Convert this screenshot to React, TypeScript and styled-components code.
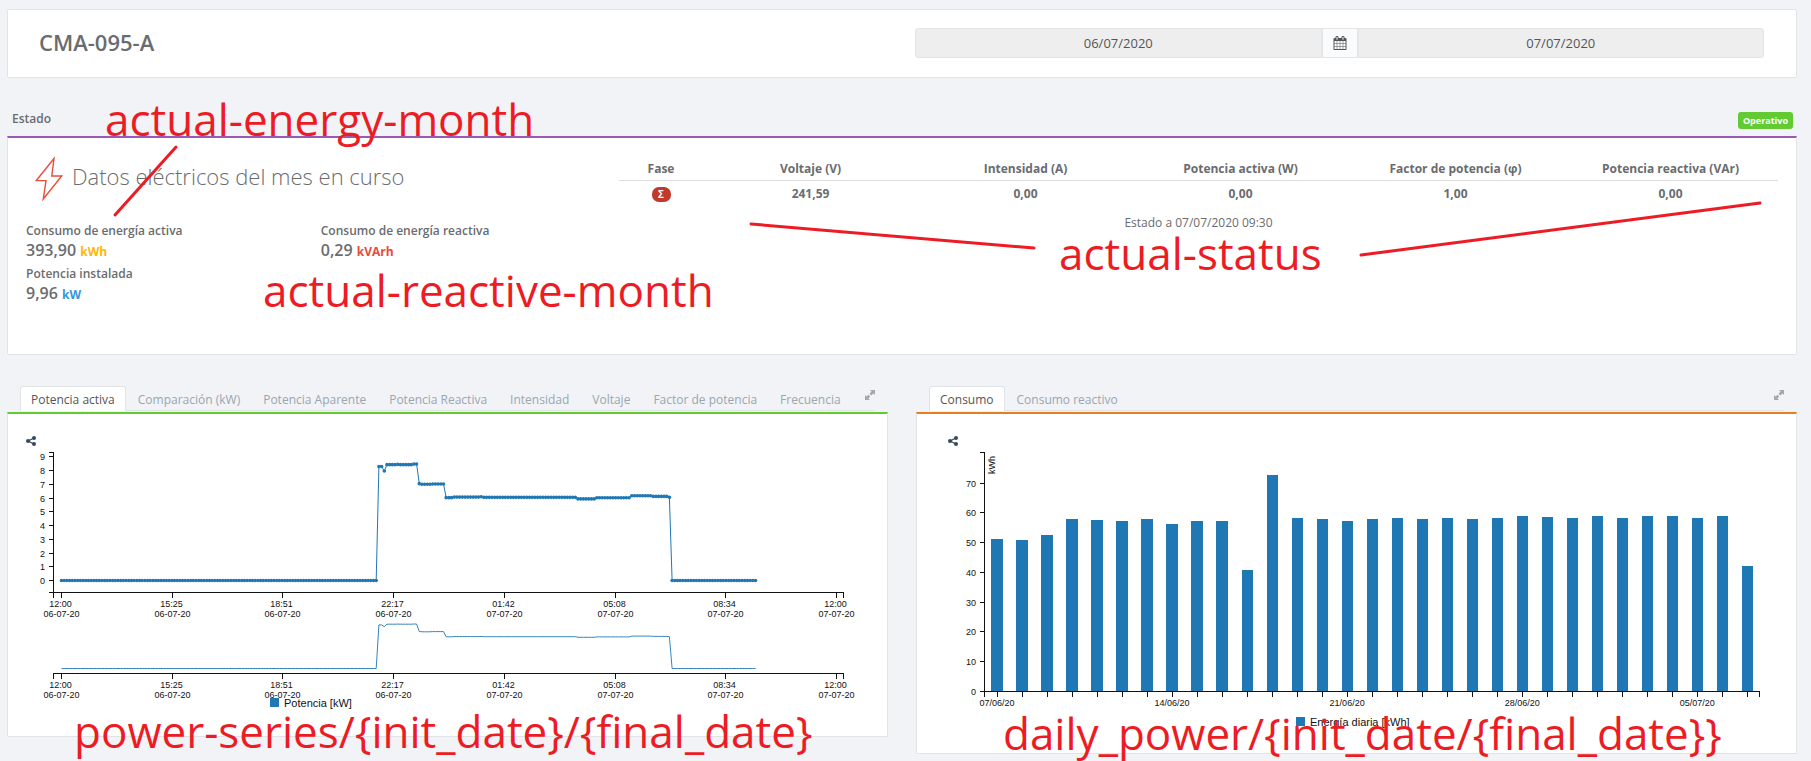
import React from "react";
import styled, { createGlobalStyle } from "styled-components";

const GlobalStyle = createGlobalStyle`
  *, *::before, *::after { box-sizing: border-box; }
  body {
    margin: 0;
    background: #f1f3f7;
    color: #6a6c6f;
    font-family: "Open Sans", "Noto Sans", sans-serif;
    font-size: 12px;
    line-height: 18px;
  }
`;

const BORDER = "#e1e4e7";
const SERIES = "#1f77b4";
const MARK = "#ed1c24";

const Page = styled.main`
  min-height: 100vh;
  padding: 9px 14px 7px 7px;
  overflow: hidden;
`;

const HeaderCard = styled.header`
  display: grid;
  grid-template-columns: 1fr 1fr;
  gap: 27px;
  align-items: center;
  padding: 18px 32px 19px 31px;
  background: #fff;
  border: 1px solid ${BORDER};
  border-radius: 2px;
`;

const DeviceName = styled.h1`
  margin: 0;
  padding-bottom: 2px;
  font-size: 22px;
  line-height: 28px;
  font-weight: 600;
`;

const DateRange = styled.div`
  display: flex;
  height: 30px;
`;

const DateInput = styled.input<{ $side: "start" | "end" }>`
  flex: 1;
  min-width: 0;
  padding: 0 8px 1px;
  border: 1px solid #e4e5e7;
  border-radius: ${(p) => (p.$side === "start" ? "3px 0 0 3px" : "0 3px 3px 0")};
  background: #eee;
  color: #555;
  font: inherit;
  font-size: 13px;
  text-align: center;
`;

const CalendarButton = styled.button`
  display: flex;
  align-items: center;
  justify-content: center;
  width: 36px;
  padding: 0;
  border: 1px solid #e4e5e7;
  background: #fafbfc;
  color: #555;
`;

const StatusHead = styled.div`
  display: flex;
  align-items: flex-start;
  justify-content: space-between;
  padding: 34px 4px 7px 5px;
`;

const StatusTitle = styled.h2`
  margin: 0;
  font-size: 12px;
  line-height: 14px;
  font-weight: 600;
`;

const StateBadge = styled.span`
  padding: 0 5px;
  border-radius: 3px;
  background: #62cb31;
  color: #fff;
  font-size: 9px;
  line-height: 17px;
  font-weight: 700;
`;

const Panel = styled.section<{ $accent: string }>`
  position: relative;
  background: #fff;
  border: 1px solid ${BORDER};
  border-top: 2px solid ${(p) => p.$accent};
  border-radius: 0 0 2px 2px;
`;

const StatusBody = styled.div`
  display: grid;
  grid-template-columns: 1fr 2fr;
  padding: 18px 0 50px;
`;

const SectionTitle = styled.div`
  display: flex;
  align-items: center;
  gap: 9px;
  padding-left: 27px;
`;

const SectionHeading = styled.h2`
  margin: 0;
  padding-bottom: 5px;
  font-size: 22px;
  line-height: 32px;
  font-weight: 300;
`;

const StatGrid = styled.div`
  display: grid;
  grid-template-columns: 51% 1fr;
  row-gap: 4px;
  padding: 21px 0 0 18px;
`;

const StatLabel = styled.div`
  font-weight: 600;
  line-height: 17px;
`;

const StatValue = styled.div`
  font-size: 16px;
  line-height: 22px;
  font-weight: 600;
`;

const Unit = styled.span<{ $color: string }>`
  color: ${(p) => p.$color};
  font-size: 12px;
  line-height: 12px;
  font-weight: 700;
`;

const Readings = styled.div`
  padding: 2px 18px 0 15px;
  text-align: center;
`;

const ReadingTable = styled.table`
  width: 100%;
  table-layout: fixed;
  border-collapse: collapse;
  font-weight: 700;

  th, td { padding: 0; }
  th { padding: 2px 0; border-bottom: 1px solid #ddd; }
  th:first-child { width: 84px; }
  td { padding-top: 4px; }
`;

const PhaseBadge = styled.span`
  display: inline-block;
  width: 19px;
  border-radius: 7px;
  background: #c0392b;
  color: #fff;
  font-size: 10px;
  line-height: 15px;
`;

const ReadingTime = styled.p`
  margin: 11px 0 0;
`;

const ChartRow = styled.div`
  display: grid;
  grid-template-columns: minmax(0, 1fr) minmax(0, 1fr);
  gap: 28px;
  align-items: start;
  padding-top: 31px;
`;

const TabBar = styled.div`
  display: flex;
  align-items: flex-start;
  gap: 1px;
  height: 25px;
  margin: 0 13px 1px;
  border-bottom: 1px solid ${BORDER};
`;

const Tab = styled.button<{ $active?: boolean }>`
  height: 25px;
  padding: 2px 10px 0;
  border: 1px solid ${(p) => (p.$active ? BORDER : "transparent")};
  border-bottom: 0;
  border-radius: 3px 3px 0 0;
  background: ${(p) => (p.$active ? "#fff" : "transparent")};
  color: ${(p) => (p.$active ? "#555" : "#9aa6b1")};
  font: inherit;
  white-space: nowrap;
`;

const ExpandButton = styled.button`
  display: flex;
  margin-left: auto;
  padding: 4px 0 0;
  border: 0;
  background: none;
  color: #a5a8ab;
`;

const ShareButton = styled.button<{ $inset: number }>`
  display: block;
  margin: 22px 0 0 ${(p) => p.$inset}px;
  padding: 0;
  border: 0;
  background: none;
  color: #34495e;
  line-height: 0;
`;

const Chart = styled.svg`
  display: block;
  width: 100%;
  height: auto;

  text { font-family: "Liberation Sans", Arial, sans-serif; font-size: 9px; fill: #111; }
  .legend { font-size: 11px; }
  .axis { fill: none; stroke: #111; shape-rendering: crispEdges; }
`;

const Note = styled.span<{ $x: number; $y: number }>`
  position: absolute;
  left: ${(p) => p.$x}px;
  top: ${(p) => p.$y}px;
  z-index: 1;
  color: ${MARK};
  font-size: 44px;
  line-height: 60px;
  white-space: nowrap;
  pointer-events: none;
`;

const Strokes = styled.svg`
  position: absolute;
  left: 0;
  top: 0;
  width: 100%;
  height: 100%;
  overflow: visible;
  pointer-events: none;
  stroke: ${MARK};
  stroke-width: 3;
  stroke-linecap: round;
`;

const CalendarIcon = () => (
  <svg width="14" height="14" viewBox="0 0 1792 1792" fill="currentColor" aria-hidden="true">
    <path d="M192 1664h288v-288h-288v288zm352 0h320v-288h-320v288zm-352-352h288v-320h-288v320zm352 0h320v-320h-320v320zm-352-384h288v-288h-288v288zm736 736h320v-288h-320v288zm-384-736h320v-288h-320v288zm768 736h288v-288h-288v288zm-384-352h320v-320h-320v320zm-352-864v-288q0-13-9.5-22.5t-22.5-9.5h-64q-13 0-22.5 9.5t-9.5 22.5v288q0 13 9.5 22.5t22.5 9.5h64q13 0 22.5-9.5t9.5-22.5zm736 864h288v-320h-288v320zm-384-384h320v-288h-320v288zm384 0h288v-288h-288v288zm32-480v-288q0-13-9.5-22.5t-22.5-9.5h-64q-13 0-22.5 9.5t-9.5 22.5v288q0 13 9.5 22.5t22.5 9.5h64q13 0 22.5-9.5t9.5-22.5zm384-64v1280q0 52-38 90t-90 38h-1408q-52 0-90-38t-38-90v-1280q0-52 38-90t90-38h128v-96q0-66 47-113t113-47h64q66 0 113 47t47 113v96h384v-96q0-66 47-113t113-47h64q66 0 113 47t47 113v96h128q52 0 90 38t38 90z" />
  </svg>
);

const BoltIcon = () => (
  <svg width="28" height="45" viewBox="0 0 28 45" fill="none" stroke="#e74c3c" strokeWidth="1.4" strokeLinejoin="miter" aria-hidden="true">
    <path d="M19 2.5 L1.3 24.6 H11 L8.3 43 L26.7 20 H16.8 Z" />
  </svg>
);

const ShareIcon = () => (
  <svg width="10" height="10" viewBox="0 0 10 10" fill="currentColor" stroke="currentColor" aria-hidden="true">
    <path d="M8 2 L2 5 L8 8" fill="none" strokeWidth="1.3" />
    <g stroke="none">
      <circle cx="2" cy="5" r="2" />
      <circle cx="8" cy="2" r="2" />
      <circle cx="8" cy="8" r="2" />
    </g>
  </svg>
);

const ExpandIcon = () => (
  <svg width="10" height="10" viewBox="0 0 10 10" fill="currentColor" aria-hidden="true">
    <path d="M5 0h5v5L8.4 3.4 6.3 5.5 4.5 3.7 6.6 1.6zM0 5l1.6 1.6L3.4 4.8 5.2 6.6 3.4 8.4 5 10H0z" />
  </svg>
);

/* One power sample every five minutes, as [value in kW, sample count]. */
const powerRuns: [number, number][] = [
  [0, 118], [8.3, 2], [7.97, 1], [8.43, 4], [8.45, 1], [8.43, 5], [8.47, 2], [7.05, 1], [7, 4], [7.02, 5],
  [6.03, 3], [6.07, 10], [6.1, 1], [6.05, 35], [5.94, 7], [6.02, 13], [6.17, 8], [6.12, 6], [6.05, 1], [0, 32],
];
const power = powerRuns.flatMap(([value, count]) => Array<number>(count).fill(value));

const timeTicks = [
  ["12:00", "06-07-20"], ["15:25", "06-07-20"], ["18:51", "06-07-20"], ["22:17", "06-07-20"],
  ["01:42", "07-07-20"], ["05:08", "07-07-20"], ["08:34", "07-07-20"], ["12:00", "07-07-20"],
];
const timeX = (sample: number) => 52.5 + sample * 2.69;
const tracePath = (y: (v: number) => number) =>
  power.map((v, i) => `${i ? "L" : "M"}${timeX(i).toFixed(1)} ${y(v).toFixed(1)}`).join("");

const TimeAxis = ({ y }: { y: number }) => (
  <g>
    <path className="axis" d={`M44.5 ${y + 5}V${y}H834.5V${y + 5}`} />
    {timeTicks.map(([hour, day], i) => {
      const x = Math.round(52 + i * 110.7) + 0.5;
      return (
        <g key={i} textAnchor="middle">
          <path className="axis" d={`M${x} ${y}v5`} />
          <text x={x - 1} y={y + 14}>{hour}</text>
          <text x={x} y={y + 24}>{day}</text>
        </g>
      );
    })}
  </g>
);

const PowerChart = () => {
  const mainY = (v: number) => 134.5 - v * 13.74;
  const briefY = (v: number) => 222.5 - v * 5.25;
  return (
    <Chart viewBox="-1 0 879 290" role="img" aria-label="Potencia activa">
      <path className="axis" d="M39.5 6.5H44.5V146.5H39.5" />
      {Array.from({ length: 10 }, (_, v) => {
        const y = Math.floor(mainY(v)) + 0.5;
        return (
          <g key={v}>
            <path className="axis" d={`M39.5 ${y}h5`} />
            <text x="36" y={y + 3} textAnchor="end">{v}</text>
          </g>
        );
      })}
      <TimeAxis y={146.5} />
      <path d={tracePath(mainY)} fill="none" stroke={SERIES} />
      <g fill={SERIES}>
        {power.map((v, i) => <circle key={i} cx={timeX(i)} cy={mainY(v)} r="1.8" />)}
      </g>
      <path d={tracePath(briefY)} fill="none" stroke={SERIES} strokeWidth="0.9" />
      <TimeAxis y={227.5} />
      <rect x="261" y="252" width="9" height="9" fill={SERIES} />
      <text className="legend" x="275" y="261">Potencia [kW]</text>
    </Chart>
  );
};

const dailyEnergy = [
  51.2, 50.9, 52.6, 57.9, 57.6, 57.3, 57.9, 56.3, 57.3, 57.3, 40.8, 72.7, 58.3, 57.9, 57.3, 57.9,
  58.3, 57.9, 58.3, 57.9, 58.3, 59, 58.6, 58.3, 59, 58.3, 59, 59, 58.3, 59, 42.1,
];
const weekLabels = ["07/06/20", "14/06/20", "21/06/20", "28/06/20", "05/07/20"];

const EnergyChart = () => {
  const y = (v: number) => 245.5 - v * 2.976;
  const x = (day: number) => 80 + day * 25.01;
  return (
    <Chart viewBox="0 0 879 307" role="img" aria-label="Consumo">
      <g fill={SERIES} shapeRendering="crispEdges">
        {dailyEnergy.map((v, i) => (
          <rect key={i} x={x(i) - 5.6} y={y(v)} width="11.25" height={245.5 - y(v)} />
        ))}
      </g>
      <path className="axis" d="M62.5 6.5H67.5V245.5H62.5" />
      <path className="axis" d="M67.5 250.5V245.5H842.5V250.5" />
      {[0, 10, 20, 30, 40, 50, 60, 70].map((v) => {
        const ty = Math.floor(y(v)) + 0.5;
        return (
          <g key={v}>
            <path className="axis" d={`M62.5 ${ty}h5`} />
            <text x="59" y={ty + 3} textAnchor="end">{v}</text>
          </g>
        );
      })}
      {dailyEnergy.map((_, i) => (
        <path key={i} className="axis" d={`M${Math.round(x(i)) + 0.5} 245.5v5`} />
      ))}
      {weekLabels.map((label, i) => (
        <text key={label} x={x(i * 7)} y="260" textAnchor="middle">{label}</text>
      ))}
      <text transform="translate(78 10) rotate(-90)" textAnchor="end">kWh</text>
      <rect x="379" y="271" width="9" height="9" fill={SERIES} />
      <text className="legend" x="393" y="280">Energía diaria [kWh]</text>
    </Chart>
  );
};

const stats = [
  { label: "Consumo de energía activa", value: "393,90", unit: "kWh", color: "#ffb606" },
  { label: "Consumo de energía reactiva", value: "0,29", unit: "kVArh", color: "#e74c3c" },
  { label: "Potencia instalada", value: "9,96", unit: "kW", color: "#3498db" },
];

const readings = [
  ["Voltaje (V)", "241,59"],
  ["Intensidad (A)", "0,00"],
  ["Potencia activa (W)", "0,00"],
  ["Factor de potencia (φ)", "1,00"],
  ["Potencia reactiva (VAr)", "0,00"],
];

type ChartPanelProps = {
  tabs: string[];
  accent: string;
  shareInset: number;
  children: React.ReactNode;
};

const ChartPanel = ({ tabs, accent, shareInset, children }: ChartPanelProps) => (
  <div>
    <TabBar role="tablist">
      {tabs.map((tab, i) => (
        <Tab key={tab} type="button" role="tab" aria-selected={i === 0} $active={i === 0}>{tab}</Tab>
      ))}
      <ExpandButton type="button" aria-label="Ampliar"><ExpandIcon /></ExpandButton>
    </TabBar>
    <Panel $accent={accent}>
      <ShareButton type="button" aria-label="Compartir" $inset={shareInset}><ShareIcon /></ShareButton>
      {children}
    </Panel>
  </div>
);

export default function App() {
  return (
    <>
      <GlobalStyle />
      <Page>
        <HeaderCard>
          <DeviceName>CMA-095-A</DeviceName>
          <DateRange>
            <DateInput $side="start" aria-label="Fecha inicial" readOnly value="06/07/2020" />
            <CalendarButton type="button" aria-label="Elegir fechas"><CalendarIcon /></CalendarButton>
            <DateInput $side="end" aria-label="Fecha final" readOnly value="07/07/2020" />
          </DateRange>
        </HeaderCard>

        <StatusHead>
          <StatusTitle>Estado</StatusTitle>
          <StateBadge>Operativo</StateBadge>
        </StatusHead>
        <Panel $accent="#9b59b6">
          <StatusBody>
            <div>
              <SectionTitle>
                <BoltIcon />
                <SectionHeading>Datos eléctricos del mes en curso</SectionHeading>
              </SectionTitle>
              <StatGrid>
                {stats.map((s) => (
                  <div key={s.label}>
                    <StatLabel>{s.label}</StatLabel>
                    <StatValue>{s.value} <Unit $color={s.color}>{s.unit}</Unit></StatValue>
                  </div>
                ))}
              </StatGrid>
            </div>
            <Readings>
              <ReadingTable>
                <thead>
                  <tr>
                    <th>Fase</th>
                    {readings.map(([name]) => <th key={name}>{name}</th>)}
                  </tr>
                </thead>
                <tbody>
                  <tr>
                    <td><PhaseBadge>Σ</PhaseBadge></td>
                    {readings.map(([name, value]) => <td key={name}>{value}</td>)}
                  </tr>
                </tbody>
              </ReadingTable>
              <ReadingTime>Estado a 07/07/2020 09:30</ReadingTime>
            </Readings>
          </StatusBody>
          <Strokes aria-hidden="true">
            <path d="M168 9L107 77" />
            <path d="M743 86L1026 110" />
            <path d="M1353 117L1752 65" />
          </Strokes>
          <Note $x={97} $y={-49}>actual-energy-month</Note>
          <Note $x={255} $y={122}>actual-reactive-month</Note>
          <Note $x={1051} $y={85}>actual-status</Note>
        </Panel>

        <ChartRow>
          <ChartPanel
            accent="#62cb31"
            shareInset={18}
            tabs={["Potencia activa", "Comparación (kW)", "Potencia Aparente", "Potencia Reactiva", "Intensidad", "Voltaje", "Factor de potencia", "Frecuencia"]}
          >
            <PowerChart />
            <Note $x={66} $y={287}>{"power-series/{init_date}/{final_date}"}</Note>
          </ChartPanel>
          <ChartPanel accent="#e67e22" shareInset={31} tabs={["Consumo", "Consumo reactivo"]}>
            <EnergyChart />
            <Note $x={86} $y={289}>{"daily_power/{init_date/{final_date}}"}</Note>
          </ChartPanel>
        </ChartRow>
      </Page>
    </>
  );
}
